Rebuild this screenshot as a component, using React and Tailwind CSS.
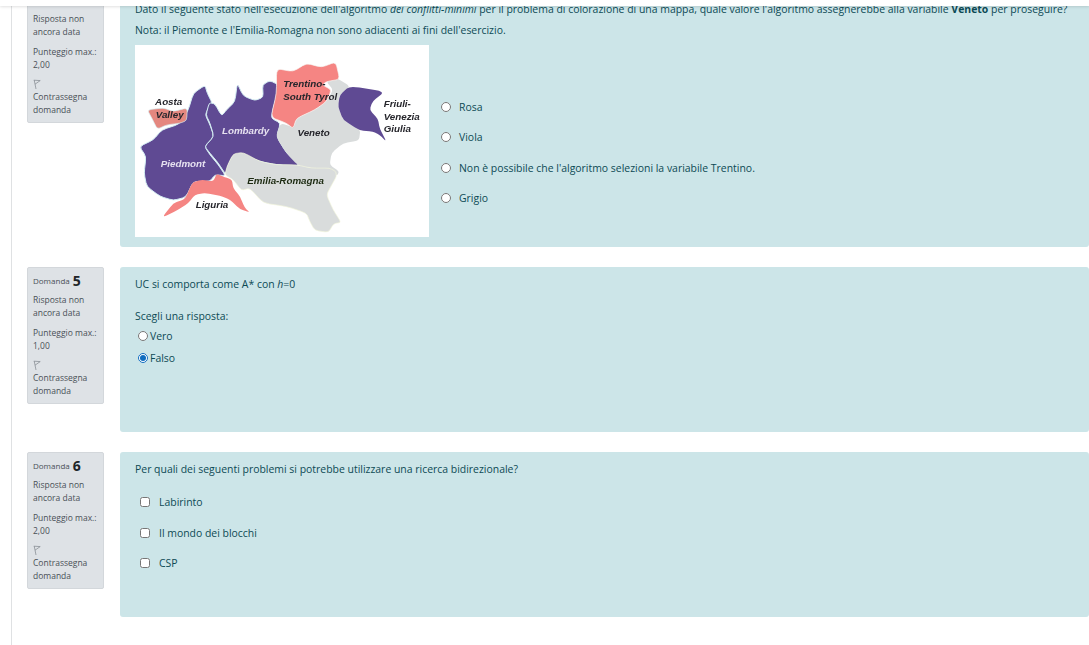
import { useState } from "react";

// polygon with only its corners rounded off, so the regions on the map keep their shape
function smooth(points, r = 0.28) {
  const at = (a, b, t) => [a[0] + (b[0] - a[0]) * t, a[1] + (b[1] - a[1]) * t];
  let d = "";
  points.forEach((p, i) => {
    const prev = points[(i - 1 + points.length) % points.length];
    const next = points[(i + 1) % points.length];
    const a = at(p, prev, r);
    const b = at(p, next, r);
    d += `${i === 0 ? "M" : "L"}${a[0]} ${a[1]} Q${p[0]} ${p[1]} ${b[0]} ${b[1]} `;
  });
  return d + "Z";
}

const piedmont = [[225,136],[232,160],[247,190],[235,205],[226,225],[240,255],[252,290],[224,320],[240,345],[265,375],[287,408],[255,405],[240,425],[190,425],[168,472],[130,482],[90,470],[50,440],[42,400],[48,350],[28,320],[70,300],[95,270],[150,252],[175,210],[190,160]];
const lombardy = [[228,225],[238,188],[255,192],[275,228],[290,210],[315,185],[322,130],[340,168],[375,182],[400,172],[398,135],[420,122],[447,135],[445,152],[430,205],[424,235],[452,250],[440,290],[470,340],[512,378],[440,375],[390,365],[340,345],[310,345],[295,375],[287,404],[265,370],[240,340],[224,320],[252,290],[240,250]];
const veneto = [[590,125],[620,113],[662,140],[630,165],[625,200],[640,240],[692,270],[688,302],[640,310],[605,340],[600,375],[628,395],[622,408],[600,388],[545,385],[505,378],[470,340],[438,290],[452,250],[490,262],[500,235],[555,210],[590,185],[610,150]];
const trentino = [[440,86],[490,95],[530,70],[575,82],[618,66],[630,118],[590,125],[578,135],[605,150],[590,185],[555,210],[500,235],[490,266],[470,250],[423,232],[440,160]];
const friuli = [[660,138],[765,155],[728,185],[720,210],[745,238],[750,265],[770,305],[750,285],[730,275],[690,272],[640,240],[625,200],[630,165]];
const emilia = [[292,378],[310,342],[340,338],[390,365],[440,375],[500,375],[545,385],[600,385],[618,395],[620,410],[606,435],[590,465],[610,510],[634,548],[612,552],[596,578],[555,572],[540,545],[530,520],[470,500],[400,490],[360,445],[335,452],[310,420],[285,405]];
const liguria = [[96,534],[130,490],[165,478],[187,428],[215,420],[250,425],[260,402],[285,412],[306,420],[310,445],[330,470],[345,505],[360,518],[330,508],[300,480],[270,468],[225,460],[195,465],[175,490],[145,510]];
const aosta = [[52,210],[100,204],[130,215],[172,204],[170,242],[150,250],[110,255],[82,268],[68,240]];

function FlagIcon() {
  return (
    <svg width="8" height="11" viewBox="0 0 8 11" className="block" fill="none" stroke="#8a9097" strokeWidth="0.8">
      <path d="M1.2 1 L3 10" />
      <path d="M0.8 1.2 L7.2 1.6 L2 5.2" />
    </svg>
  );
}

function InfoCard({ number, maxGrade }) {
  return (
    <div className="w-[77px] shrink-0 self-start h-[137px] bg-[#dee2e6] border border-[#d3d7db] rounded-[2px] px-[5px] pt-[4px] text-[8.5px] leading-[13px] text-[#495057]">
      <div className="h-[17px] flex items-center gap-[3px]">
        <span className="text-[8px]">Domanda</span>
        <span className="text-[14px] font-bold text-[#212529]">{number}</span>
      </div>
      <div className="mt-[4px]">
        <div>Risposta non</div>
        <div>ancora data</div>
      </div>
      <div className="mt-[7px]">
        <div>Punteggio max.:</div>
        <div>{maxGrade}</div>
      </div>
      <div className="mt-[8px]">
        <FlagIcon />
        <div>Contrassegna</div>
        <div>domanda</div>
      </div>
    </div>
  );
}

function ItalyMap() {
  const edge = "#d4eef3";
  return (
    <svg width="294" height="192" viewBox="15 15 883 577" className="block bg-white shrink-0 blur-[0.4px]">
      <path fill="#5f4a93" stroke={edge} strokeWidth="3" d={smooth(piedmont)} />
      <path fill="#5f4a93" stroke={edge} strokeWidth="3" d={smooth(lombardy)} />
      <path fill="#d9dcdc" d={smooth(veneto)} />
      <path fill="#f58583" stroke="#f6fbf8" strokeWidth="2" d={smooth(trentino)} />
      <path fill="#5f4a93" d={smooth(friuli)} />
      <path fill="#d9dcdc" stroke="#f3f6dc" strokeWidth="2" d={smooth(emilia)} />
      <path fill="#f58583" d={smooth(liguria)} />
      <path fill="#e4877f" stroke={edge} strokeWidth="2" d={smooth(aosta)} />
      <g fontFamily="'Liberation Sans', sans-serif" fontSize="29.5" fontWeight="700" fontStyle="italic" fill="#26262c">
        <text x="75" y="194">Aosta</text>
        <text x="77" y="233">Valley</text>
        <text x="460" y="140">Trentino-</text>
        <text x="460" y="179">South Tyrol</text>
        <text x="762" y="201">Friuli-</text>
        <text x="762" y="239">Venezia</text>
        <text x="762" y="277">Giulia</text>
        <text x="503" y="287">Veneto</text>
        <text x="352" y="434" fill="#1d2b12">Emilia-Romagna</text>
        <text x="197" y="504">Liguria</text>
        <text x="276" y="283" fill="#e6e1f0">Lombardy</text>
        <text x="92" y="382" fill="#e6e1f0">Piedmont</text>
      </g>
    </svg>
  );
}

function Question({ number, maxGrade, children, height, pt = "pt-[9px]" }) {
  return (
    <div className="flex gap-[16px]">
      <InfoCard number={number} maxGrade={maxGrade} />
      <div className={`flex-1 ${height} ${pt} bg-[#cce5e8] rounded-[3px] pl-[15px] text-[#0c4a55]`}>
        {children}
      </div>
    </div>
  );
}

function Option({ type = "radio", name, label, gap = "gap-[8px]", checked, onSelect }) {
  return (
    <label className={`flex items-center ${gap} h-[20px]`}>
      <input
        type={type}
        name={name}
        checked={checked}
        onChange={onSelect}
        className="w-[10px] h-[10px] m-0 accent-[#0f6cbf]"
      />
      <span>{label}</span>
    </label>
  );
}

export default function App() {
  const [q4, setQ4] = useState(null);
  const [q5, setQ5] = useState("Falso");
  const [q6, setQ6] = useState({});

  return (
    <div className="relative h-[645px] overflow-hidden bg-white font-['Open_Sans',sans-serif] text-[10.45px] leading-[16px]">
      <div className="absolute top-0 left-0 right-0 h-[6px] bg-white shadow-[0_1px_3px_rgba(0,0,0,0.12)] z-10" />
      <div className="ml-[11px] h-full flow-root border-l border-[#dfe1e3] pl-[15px]">
        <div className="-mt-[14px] flex flex-col gap-[20px]">
          <Question number="4" maxGrade="2,00" height="h-[261px]" pt="pt-[15px]">
            <p className="whitespace-nowrap">
              Dato il seguente stato nell'esecuzione dell'algoritmo <em>dei conflitti-minimi</em> per il problema di colorazione di una mappa, quale valore l'algoritmo assegnerebbe alla variabile <strong>Veneto</strong> per proseguire?
            </p>
            <p className="mt-[5px]">Nota: il Piemonte e l'Emilia-Romagna non sono adiacenti ai fini dell'esercizio.</p>
            <div className="flex gap-[12px] mt-[7px]">
              <ItalyMap />
              <div className="flex flex-col gap-[10.33px] pt-[52px]">
                {["Rosa", "Viola", "Non è possibile che l'algoritmo selezioni la variabile Trentino.", "Grigio"].map((o) => (
                  <Option key={o} name="q4" label={o} checked={q4 === o} onSelect={() => setQ4(o)} />
                ))}
              </div>
            </div>
          </Question>

          <Question number="5" maxGrade="1,00" height="h-[165px]">
            <p>UC si comporta come A* con <em>h</em>=0</p>
            <p className="mt-[16px]">Scegli una risposta:</p>
            <div className="mt-[2px] ml-[3px] flex flex-col gap-[2px]">
              {["Vero", "Falso"].map((o) => (
                <Option key={o} name="q5" label={o} gap="gap-[2px]" checked={q5 === o} onSelect={() => setQ5(o)} />
              ))}
            </div>
          </Question>

          <Question number="6" maxGrade="2,00" height="h-[165px]">
            <p>Per quali dei seguenti problemi si potrebbe utilizzare una ricerca bidirezionale?</p>
            <div className="mt-[15px] ml-[5px] flex flex-col gap-[10.6px]">
              {["Labirinto", "Il mondo dei blocchi", "CSP"].map((o) => (
                <Option
                  key={o}
                  type="checkbox"
                  label={o}
                  gap="gap-[9px]"
                  checked={!!q6[o]}
                  onSelect={() => setQ6({ ...q6, [o]: !q6[o] })}
                />
              ))}
            </div>
          </Question>
        </div>
      </div>
    </div>
  );
}
